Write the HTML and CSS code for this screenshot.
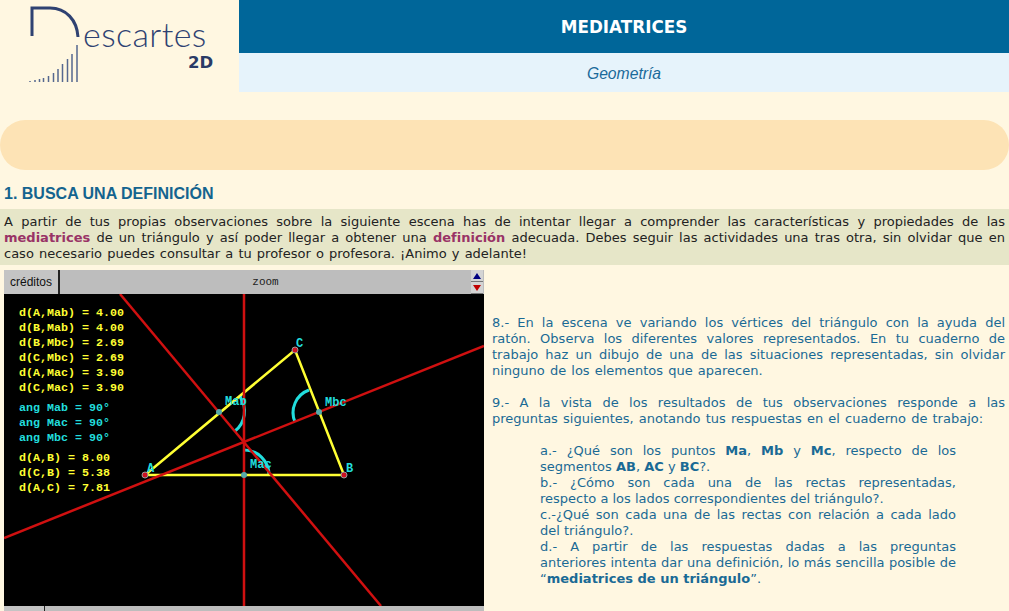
FILE: index.html

```html
<!DOCTYPE html>
<html lang="es">
<head>
<meta charset="utf-8"/>
<title>Mediatrices</title>
<link rel="stylesheet" href="styles.css">
</head>
<body>
<div class="page">
<div class="top">
  <div class="logo">
    <svg width="239" height="92" viewBox="0 0 239 92">
      <path d="M32 36V8H50C66 8 77 20 78 37" fill="none" stroke="#2f4272" stroke-width="3"/>
      <g stroke="#56688f" stroke-width="1.5">
        <path d="M30 82V81M35 82V80M39.500 82V79M43.500 82V78M48.500 82V76M53.500 82V73M58 82V69M62.500 82V64M67.500 82V59M72 82V54M77 82V45"/>
      </g>
      <text class="logo-name" x="83" y="47">escartes</text>
      <text class="logo-2d" x="188" y="68">2D</text>
    </svg>
  </div>
  <div class="titles">
    <h1>MEDIATRICES</h1>
    <div class="subject">Geometría</div>
  </div>
</div>

<div class="band"></div>

<h2>1. BUSCA UNA DEFINICIÓN</h2>
<p class="intro">A partir de tus propias observaciones sobre la siguiente escena has de intentar llegar a comprender las características y propiedades de las <b>mediatrices</b> de un triángulo y así poder llegar a obtener una <b>definición</b> adecuada. Debes seguir las actividades una tras otra, sin olvidar que en caso necesario puedes consultar a tu profesor o profesora. ¡Animo y adelante!</p>

<div class="work">
  <div class="applet">
    <div class="applet-bar">
      <span class="credits">créditos</span>
      <span class="zoom">zoom</span>
      <span class="spin">
        <span class="spin-btn"><svg width="8" height="6" viewBox="0 0 8 6"><path d="M4 0L8 6H0Z" fill="#000080"/></svg></span>
        <span class="spin-btn"><svg width="8" height="6" viewBox="0 0 8 6"><path d="M0 0H8L4 6Z" fill="#c00000"/></svg></span>
      </span>
    </div>
    <svg class="scene" width="480" height="312" viewBox="4 294 480 312">
      <g class="arcs">
        <path d="M240 397A25 25 0 0 1 235 431"/>
        <path d="M309 390A24 24 0 0 0 295 422"/>
        <path d="M244 450A25 25 0 0 1 269 475"/>
      </g>
      <g class="sides">
        <path d="M145 475H344L295 350Z"/>
      </g>
      <g class="lines">
        <path d="M244 294V606"/>
        <path d="M120 294L381 606"/>
        <path d="M4 538L484 346"/>
      </g>
      <g class="mids">
        <circle cx="219" cy="412" r="3"/>
        <circle cx="319" cy="412" r="3"/>
        <circle cx="244" cy="475" r="3"/>
      </g>
      <g class="verts">
        <circle cx="145" cy="475" r="3"/>
        <circle cx="344" cy="475" r="3"/>
        <circle cx="295" cy="350" r="3"/>
      </g>
      <g class="labels">
        <text x="225" y="405">Mab</text>
        <text x="325" y="406">Mbc</text>
        <text x="250" y="468">Mac</text>
        <text x="147" y="472">A</text>
        <text x="346" y="472">B</text>
        <text x="296" y="347">C</text>
      </g>
      <g class="vals">
        <text x="19" y="316">d(A,Mab) = 4.00</text>
        <text x="19" y="331">d(B,Mab) = 4.00</text>
        <text x="19" y="346">d(B,Mbc) = 2.69</text>
        <text x="19" y="361">d(C,Mbc) = 2.69</text>
        <text x="19" y="376">d(A,Mac) = 3.90</text>
        <text x="19" y="391">d(C,Mac) = 3.90</text>
        <text class="ang" x="19" y="411">ang Mab = 90°</text>
        <text class="ang" x="19" y="426">ang Mac = 90°</text>
        <text class="ang" x="19" y="441">ang Mbc = 90°</text>
        <text x="19" y="461">d(A,B) = 8.00</text>
        <text x="19" y="476">d(C,B) = 5.38</text>
        <text x="19" y="491">d(A,C) = 7.81</text>
      </g>
    </svg>
    <div class="applet-foot"><span class="foot-btn"></span></div>
  </div>

  <div class="tasks">
    <p>8.- En la escena ve variando los vértices del triángulo con la ayuda del ratón. Observa los diferentes valores representados. En tu cuaderno de trabajo haz un dibujo de una de las situaciones representadas, sin olvidar ninguno de los elementos que aparecen.</p>
    <p>9.- A la vista de los resultados de tus observaciones responde a las preguntas siguientes, anotando tus respuestas en el cuaderno de trabajo:</p>
    <div class="questions">
      <div>a.- ¿Qué son los puntos <b>Ma</b>, <b>Mb</b> y <b>Mc</b>, respecto de los segmentos <b>AB</b>, <b>AC</b> y <b>BC</b>?.</div>
      <div>b.- ¿Cómo son cada una de las rectas representadas, respecto&nbsp;a los lados correspondientes del triángulo?.</div>
      <div>c.-¿Qué son cada una de las rectas con relación a cada lado del&nbsp;triángulo?.</div>
      <div>d.- A partir de las respuestas dadas a las preguntas anteriores&nbsp;intenta dar una definición, lo más sencilla posible de “<b>mediatrices de un triángulo</b>”.</div>
    </div>
  </div>
</div>
</div>
</body>
</html>
```

FILE: styles.css

```css
html, body { margin: 0; padding: 0; overflow: hidden; }
body { background: #fff7e1; font-family: "DejaVu Sans", Verdana, sans-serif; font-size: 13px; line-height: 16px; word-spacing: 1px; }
.page { height: 611px; overflow: hidden; }

.top { display: flex; height: 92px; }
.logo { width: 239px; flex: none; }
.logo svg { display: block; }
.logo-name { font-family: Lato, sans-serif; font-weight: 300; font-size: 34px; letter-spacing: 0.4px; fill: #2f4272; }
.logo-2d { font-family: "DejaVu Sans", sans-serif; font-weight: bold; font-size: 16.5px; fill: #2a3b66; }
.titles { flex: 1; }
h1 { margin: 0; height: 53px; background: #006699; color: white; font-size: 16.8px; line-height: 55px; font-weight: bold; text-align: center; }
.subject { height: 39px; background: #e6f3fb; color: #1a6a9a; font-family: "Liberation Sans", Arial, sans-serif; font-size: 15.7px; font-style: italic; line-height: 41px; text-align: center; }

.band { height: 50px; margin-top: 28px; background: #fde3b5; border-radius: 25px; }

h2 { margin: 14px 0 6px 4px; color: #14648f; font-family: "Liberation Sans", Arial, sans-serif; font-size: 16px; line-height: 19px; font-weight: bold; word-spacing: 0; }
.intro { margin: 0; padding: 5px 4px 3px; background: #e6e6c8; color: #222; text-align: justify; }
.intro b { color: #993366; }

.work { display: flex; margin-top: 5px; }
.applet { width: 480px; margin-left: 4px; flex: none; }
.applet-bar { display: flex; height: 24px; background: #bdbdbd; align-items: stretch; }
.credits { width: 54px; border-right: 2px solid #222; background: #c4c4c4; color: #111; font-family: "Liberation Sans", Arial, sans-serif; font-size: 12px; line-height: 25px; text-align: center; }
.zoom { flex: 1; color: #222; font-family: "Liberation Mono", monospace; font-size: 11px; line-height: 25px; text-align: center; }
.spin { width: 12px; margin-right: 1px; display: flex; flex-direction: column; }
.spin-btn { flex: 1; display: flex; align-items: center; justify-content: center; background: #d4d4d4; border-bottom: 1px solid #777; }
.scene { display: block; background: #000; }
.applet-foot { height: 6px; background: #bdbdbd; }
.foot-btn { display: block; width: 40px; height: 6px; border-right: 1px solid #222; background: #c4c4c4; }

.sides path { fill: none; stroke: #ffff33; stroke-width: 2.5; }
.lines path { fill: none; stroke: #d01010; stroke-width: 2.5; }
.arcs path { fill: none; stroke: #22dddd; stroke-width: 3; }
.mids circle { fill: #55aaaa; }
.verts circle { fill: #cc1122; stroke: #999; stroke-width: 1; }
.labels text { fill: #22dddd; font-family: "Liberation Mono", monospace; font-weight: bold; font-size: 12px; word-spacing: 0; }
.vals text { fill: #ffff33; font-family: "Liberation Mono", monospace; font-weight: bold; font-size: 11.67px; word-spacing: 0; }
.vals .ang { fill: #22dddd; }

.tasks { flex: 1; margin: 45px 4px 0 8px; color: #1a6a95; text-align: justify; }
.tasks p { margin: 0 0 16px; }
.questions { margin: 0 49px 0 48px; word-spacing: 0; }
```
